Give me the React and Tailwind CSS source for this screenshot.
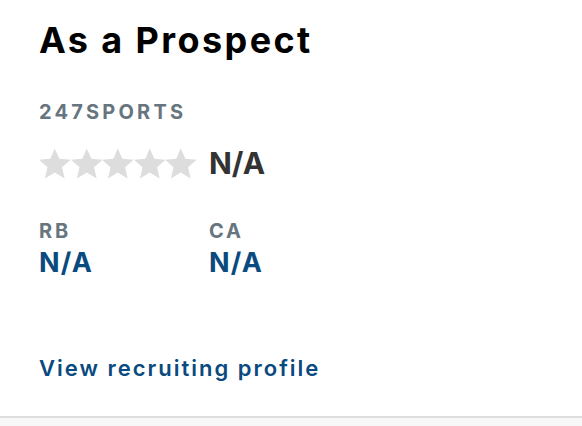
import React from 'react';

const Star = () => (
  <svg viewBox="1.2 1.5 21.6 20.6" className="h-[31px] w-[31.6px]" fill="#dddddd">
    <path d="M12 1.5l3.1 7.1 7.7.7-5.8 5.1 1.7 7.6L12 18l-6.7 4 1.7-7.6-5.8-5.1 7.7-.7z" />
  </svg>
);

export default function App() {
  return (
    <div className="w-[582px] h-[426px] bg-[#f7f7f7] font-['Inter','Liberation_Sans',sans-serif]">
      <div className="bg-white h-[418px] border-b-2 border-[#dddddd] pl-[39px] pt-[18px]">
        <h2 className="text-[36px] leading-[44px] font-bold tracking-[2.4px] text-black">As a Prospect</h2>
        <div className="mt-[38px] text-[20px] leading-[24px] font-bold tracking-[3.2px] text-[#67757f]">247SPORTS</div>
        <div className="mt-[24px] flex items-center gap-[12px]">
          <div className="flex">
            <Star /><Star /><Star /><Star /><Star />
          </div>
          <span className="text-[30px] leading-[31px] font-bold text-[#333333]">N/A</span>
        </div>
        <div className="mt-[40px] flex">
          <div className="w-[170px]">
            <div className="text-[20px] leading-[24px] font-bold tracking-[2.8px] text-[#67757f]">RB</div>
            <div className="mt-[5px] text-[27px] leading-[30px] font-bold tracking-[1.2px] text-[#0a4a7f]">N/A</div>
          </div>
          <div>
            <div className="text-[20px] leading-[24px] font-bold tracking-[2.8px] text-[#67757f]">CA</div>
            <div className="mt-[5px] text-[27px] leading-[30px] font-bold tracking-[1.2px] text-[#0a4a7f]">N/A</div>
          </div>
        </div>
        <a className="block mt-[77px] text-[22px] leading-[26px] font-semibold tracking-[2px] text-[#0a4a7f]" href="#">
          View recruiting profile
        </a>
      </div>
    </div>
  );
}
